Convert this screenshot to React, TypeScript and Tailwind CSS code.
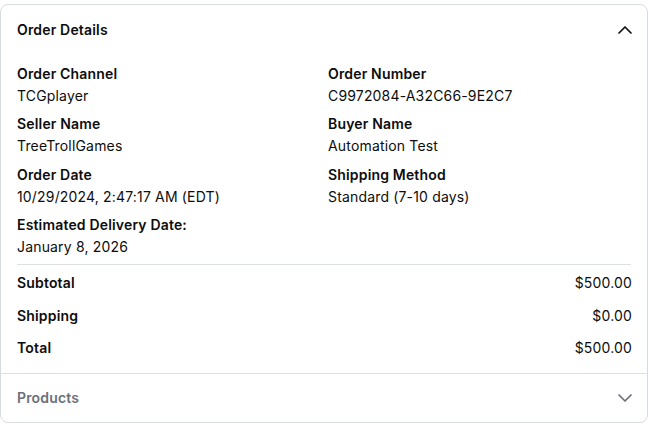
import { ChevronDown, ChevronUp } from "lucide-react";

const details = [
  { label: "Order Channel", value: "TCGplayer" },
  { label: "Order Number", value: "C9972084-A32C66-9E2C7" },
  { label: "Seller Name", value: "TreeTrollGames" },
  { label: "Buyer Name", value: "Automation Test" },
  { label: "Order Date", value: "10/29/2024, 2:47:17 AM (EDT)" },
  { label: "Shipping Method", value: "Standard (7-10 days)" },
  { label: "Estimated Delivery Date:", value: "January 8, 2026" },
];

const totals = [
  { label: "Subtotal", value: "$500.00" },
  { label: "Shipping", value: "$0.00" },
  { label: "Total", value: "$500.00" },
];

export default function App() {
  return (
    <div className="bg-white pt-1" style={{ fontFamily: "Inter, 'Noto Sans', sans-serif" }}>
      <div className="rounded-lg border border-[#d8dbe0] bg-white text-[14px] leading-5 tracking-[0.012em] text-[#0d0d0d]">
        {/* Order Details */}
        <div className="flex items-center justify-between px-4 pt-[15px] pb-4">
          <h3 className="font-semibold">Order Details</h3>
          <ChevronUp className="-my-1 -mr-1.5 h-6 w-6 text-[#111111]" strokeWidth={1.75} />
        </div>
        <div className="px-4 pt-[6.5px] pb-[14.5px]">
          <div className="grid grid-cols-2 gap-x-2 gap-y-[7.5px]">
            {details.map((d) => (
              <div key={d.label}>
                <p className="font-semibold leading-[21px]">{d.label}</p>
                <p className="mt-px leading-[21px]">{d.value}</p>
              </div>
            ))}
          </div>
          <div className="mt-[7px] flex flex-col gap-[12.5px] border-t border-[#dcdfe4] pt-2">
            {totals.map((t) => (
              <div key={t.label} className="flex items-center justify-between">
                <span className="font-semibold">{t.label}</span>
                <span className="-mr-px">{t.value}</span>
              </div>
            ))}
          </div>
        </div>

        {/* Products */}
        <div className="flex h-[49px] items-center justify-between border-t border-[#dcdfe4] px-4 pt-px">
          <h3 className="font-semibold text-[#6b6f7a]">Products</h3>
          <ChevronDown className="-mr-1.5 h-6 w-6 text-[#6b6f7a]" strokeWidth={1.75} />
        </div>
      </div>
    </div>
  );
}
